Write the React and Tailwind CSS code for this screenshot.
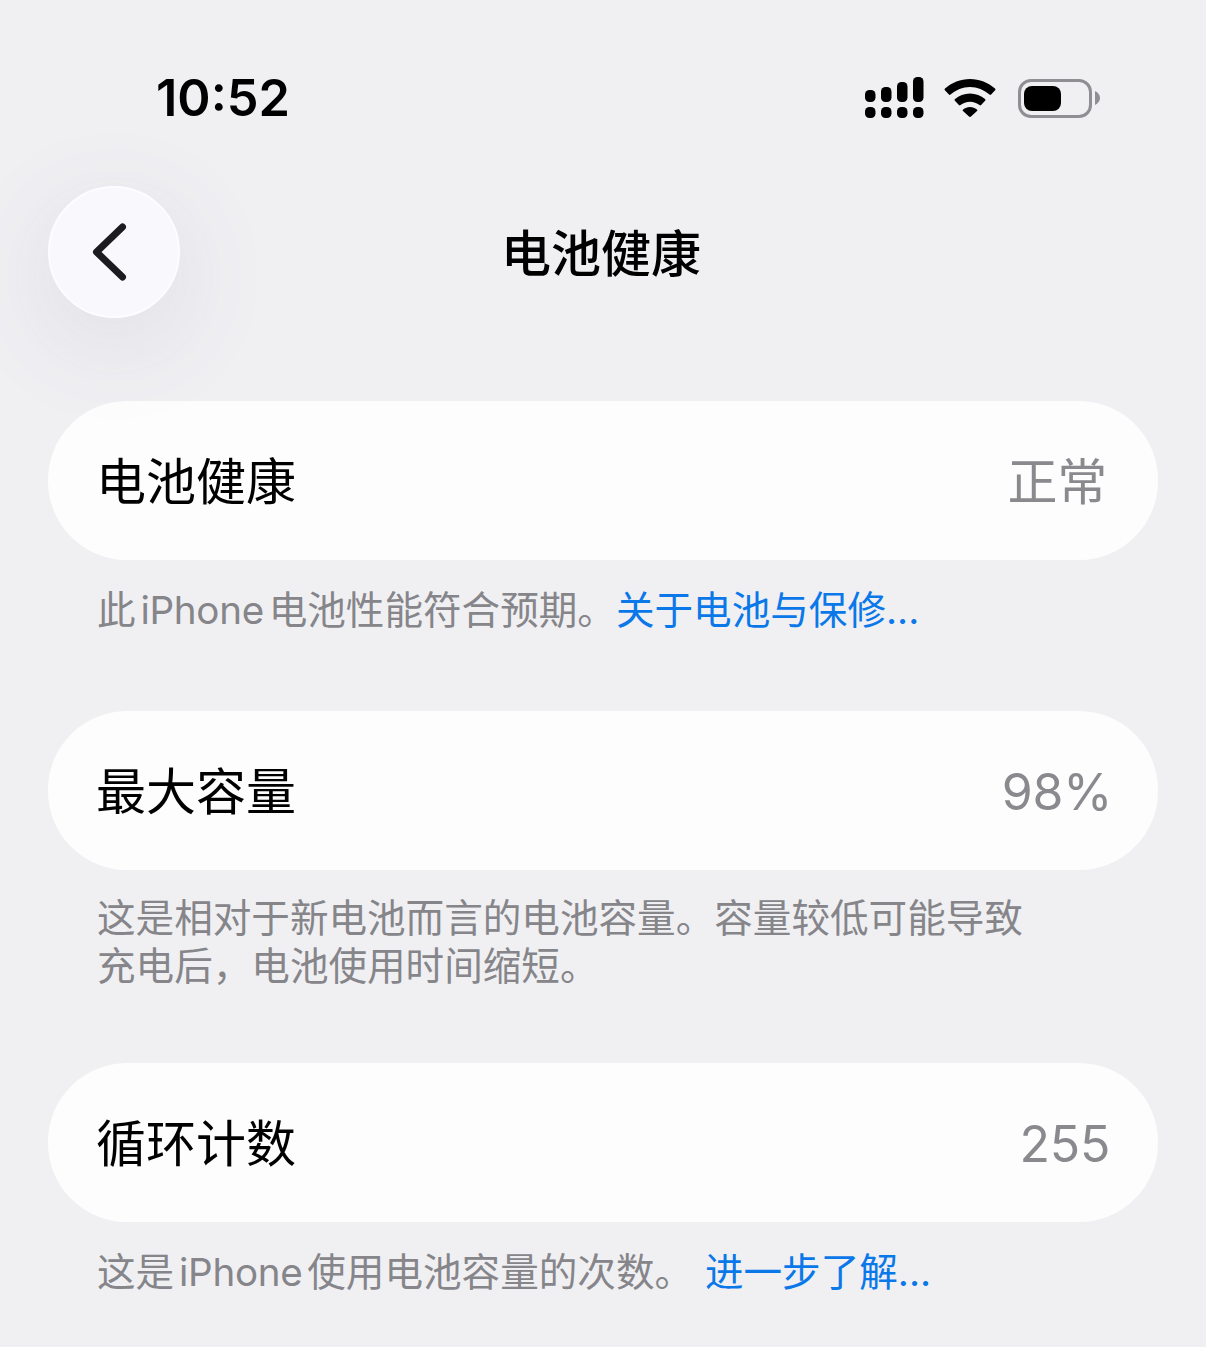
const CJK = { fontFamily: '"Inter", "Noto Sans CJK SC", sans-serif' };

function Signal() {
  return (
    <svg width="60" height="42" viewBox="0 0 60 42" className="block">
      <g fill="#000">
        <rect x="1" y="13" width="10.500" height="12" rx="4.500" />
        <rect x="17" y="10" width="10.500" height="15" rx="4.500" />
        <rect x="33" y="5" width="10.500" height="20" rx="4.500" />
        <rect x="49" y="0" width="10.500" height="25" rx="4.500" />
        <rect x="1" y="30" width="10.500" height="11" rx="4.500" />
        <rect x="17" y="30" width="10.500" height="11" rx="4.500" />
        <rect x="33" y="30" width="10.500" height="11" rx="4.500" />
        <rect x="49" y="30" width="10.500" height="11" rx="4.500" />
      </g>
    </svg>
  );
}

function Wifi() {
  return (
    <svg width="52" height="38" viewBox="0 0 52 38" className="block">
      <path d="M26 0C16.500 0 7.800 3.600 1 9.600c-.6.500-.6 1.200-.1 1.700l4 4.200c.5.500 1.100.5 1.600.1C11.900 11.100 18.600 8 26 8s14.100 3.100 19.500 7.600c.5.400 1.100.4 1.600-.1l4-4.200c.5-.5.5-1.200-.1-1.700C44.200 3.600 35.500 0 26 0z" fill="#000" />
      <path d="M26 14.500c-5.800 0-11 2.200-15 5.600-.6.500-.6 1.200-.1 1.700l4 4.200c.5.500 1.100.5 1.600.1 2.600-2.100 5.900-3.400 9.500-3.400s6.900 1.300 9.500 3.400c.5.400 1.100.4 1.600-.1l4-4.200c.5-.5.5-1.200-.1-1.700-4-3.400-9.200-5.600-15-5.600z" fill="#000" />
      <path d="M26 28c-2.600 0-5 .9-6.900 2.400-.6.500-.6 1.200-.1 1.700l6 5.400c.6.600 1.400.6 2 0l6-5.400c.5-.5.5-1.200-.1-1.700C31 28.900 28.600 28 26 28z" fill="#000" />
    </svg>
  );
}

function Battery() {
  return (
    <div className="flex items-center ml-[2px]">
      <div className="w-[74px] h-[39px] rounded-[13px] border-[3px] border-[#8e8e93] py-[4px] pl-[3px] pr-[4px]">
        <div className="w-[37px] h-full rounded-[8px] bg-black" />
      </div>
      <svg width="6" height="14" viewBox="0 0 6 14" className="block ml-[3px]">
        <path d="M0 0C3 1.500 5 4 5 7s-2 5.500-5 7z" fill="#8e8e93" />
      </svg>
    </div>
  );
}

function Card({ title, value, valueClass = "" }) {
  return (
    <div className="mx-[48px] h-[159px] pt-[2px] rounded-[79px] bg-[#fdfdfe] flex items-center justify-between pl-[48px] pr-[48px]">
      <span className="text-[50px] leading-[62px] text-black">{title}</span>
      <span className={`text-[50px] leading-[62px] text-[#8a8a8e] tracking-[-0.3px] ${valueClass}`}>{value}</span>
    </div>
  );
}

function Note({ children, className }) {
  return (
    <p className={`mx-[97px] text-[38.6px] leading-[48px] text-[#85858a] whitespace-nowrap [word-spacing:-6px] ${className}`}>{children}</p>
  );
}

export default function App() {
  return (
    <div style={CJK} className="w-[1206px] h-[1347px] overflow-hidden bg-[#f0f0f3]">
      <div className="h-[186px] pl-[156px] pr-[105px] pt-[67px] flex items-start justify-between">
        <span className="text-[50.500px] leading-[62px] font-semibold text-black">10:52</span>
        <div className="flex items-center gap-[20px] pt-[10px]">
          <Signal />
          <Wifi />
          <Battery />
        </div>
      </div>
      <div className="relative h-[132px] flex items-center justify-center">
        <button className="absolute left-[48px] top-0 w-[132px] h-[132px] rounded-full bg-[#f9f9fd] border-[2px] border-[#fdfdff] shadow-[0_24px_100px_rgba(90,90,120,0.12)] flex items-center justify-center">
          <svg width="40" height="64" viewBox="0 0 40 64" className="block -ml-[8px]">
            <path d="M32.500 7 L6.500 32 L32.500 57" fill="none" stroke="#1c1c20" strokeWidth="7" strokeLinecap="round" strokeLinejoin="round" />
          </svg>
        </button>
        <span className="text-[50px] leading-[62px] font-medium text-black mt-[3px] -ml-[4px]">电池健康</span>
      </div>
      <div className="h-[83px]" />
      <Card title="电池健康" value="正常" valueClass="mr-[3px]" />
      <Note className="mt-[26px]">
        此 <span className="tracking-[-0.3px]">iPhone</span> 电池性能符合预期。<span className="text-[#0a78e8]">关于电池与保修...</span>
      </Note>
      <div className="h-[77px]" />
      <Card title="最大容量" value="98%" valueClass="-mr-[2px]" />
      <Note className="mt-[24px]">
        这是相对于新电池而言的电池容量。容量较低可能导致
        <br />
        充电后，电池使用时间缩短。
      </Note>
      <div className="h-[73px]" />
      <Card title="循环计数" value="255" />
      <Note className="mt-[26px]">
        这是 <span className="tracking-[-0.3px]">iPhone</span> 使用电池容量的次数。 <span className="text-[#0a78e8] ml-[7px]">进一步了解...</span>
      </Note>
    </div>
  );
}
